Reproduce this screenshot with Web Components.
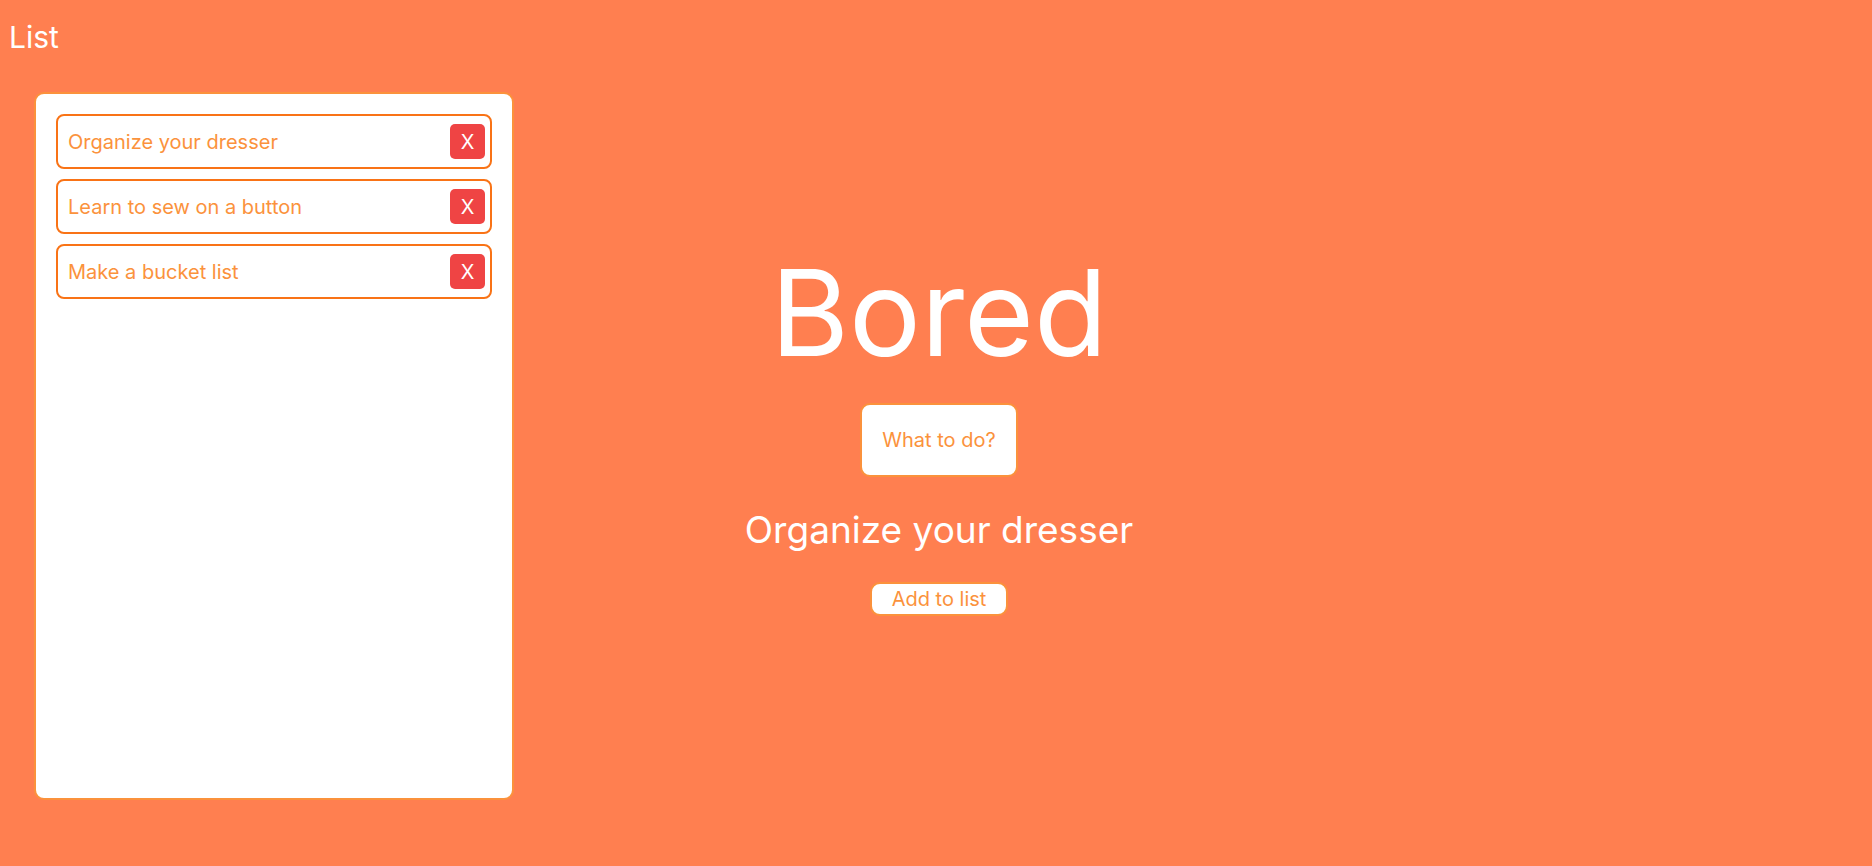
<!DOCTYPE html>
<html lang="en">
<head>
<meta charset="utf-8">
<meta name="viewport" content="width=device-width, initial-scale=1">
<title>Bored</title>
<style>
  body { margin: 0; background: #ff7f50; color: #fff; font: 20px/30px Inter, sans-serif; }
</style>
</head>
<body>
<bored-app>
  <todo-list slot="list">
    <todo-item>Organize your dresser</todo-item>
    <todo-item>Learn to sew on a button</todo-item>
    <todo-item>Make a bucket list</todo-item>
  </todo-list>
  <activity-picker>Organize your dresser</activity-picker>
</bored-app>

<template id="bored-app">
  <style>
    :host { display: grid; grid-template-columns: 548px 1fr 542px; min-height: 100vh; }
    main { display: grid; align-items: center; padding-top: 2px; }
  </style>
  <slot name="list"></slot>
  <main><slot></slot></main>
</template>

<template id="todo-list">
  <style>
    :host { display: flex; flex-direction: column; box-sizing: border-box; padding: 17px 34px 66px 0; }
    h2 { margin: 0 0 35px 9px; font-size: 30px; line-height: 40px; font-weight: 400; }
    .panel {
      flex: 1; display: flex; flex-direction: column; gap: 10px;
      margin-left: 34px; padding: 20px;
      background: #fff; border: 2px solid #fb923c; border-radius: 10px;
    }
  </style>
  <h2>List</h2>
  <div class="panel" role="list"><slot></slot></div>
</template>

<template id="todo-item">
  <style>
    :host {
      display: flex; align-items: center; justify-content: space-between;
      padding: 8px 5px 8px 10px; border: 2px solid #f97316; border-radius: 8px; color: #fb923c;
    }
    button {
      width: 35px; height: 35px; padding: 0; border: 0; border-radius: 5px;
      background: #ef4444; color: #fff; font: inherit; cursor: pointer;
    }
  </style>
  <span><slot></slot></span>
  <button type="button">X</button>
</template>

<template id="activity-picker">
  <style>
    :host { display: flex; flex-direction: column; align-items: center; gap: 30px; text-align: center; }
    h1, p { margin: 0; font-weight: 400; }
    h1 { font-size: 120px; line-height: 120px; }
    p { font-size: 37px; line-height: 45px; }
    button {
      padding: 0 20px; border: 2px solid #fb923c; border-radius: 10px;
      background: #fff; color: #fb923c; font: inherit; cursor: pointer;
    }
    .ask { padding: 20px; }
  </style>
  <h1>Bored</h1>
  <button class="ask" type="button">What to do?</button>
  <p><slot></slot></p>
  <button type="button">Add to list</button>
</template>

<script>
  class TemplateElement extends HTMLElement {
    constructor() {
      super();
      const template = document.getElementById(this.localName);
      this.attachShadow({ mode: 'open' }).append(template.content.cloneNode(true));
    }
  }

  class BoredApp extends TemplateElement {}
  class TodoList extends TemplateElement {}

  class TodoItem extends TemplateElement {
    connectedCallback() {
      this.setAttribute('role', 'listitem');
      this.shadowRoot.querySelector('button').onclick = () => this.remove();
    }
  }

  class ActivityPicker extends TemplateElement {
    connectedCallback() {
      const ideas = ['Organize your dresser', 'Learn to sew on a button', 'Make a bucket list'];
      const [ask, add] = this.shadowRoot.querySelectorAll('button');
      ask.onclick = () => {
        this.textContent = ideas[(ideas.indexOf(this.textContent) + 1) % ideas.length];
      };
      add.onclick = () => {
        const item = document.createElement('todo-item');
        item.textContent = this.textContent;
        document.querySelector('todo-list').append(item);
      };
    }
  }

  customElements.define('bored-app', BoredApp);
  customElements.define('todo-list', TodoList);
  customElements.define('todo-item', TodoItem);
  customElements.define('activity-picker', ActivityPicker);
</script>
</body>
</html>
